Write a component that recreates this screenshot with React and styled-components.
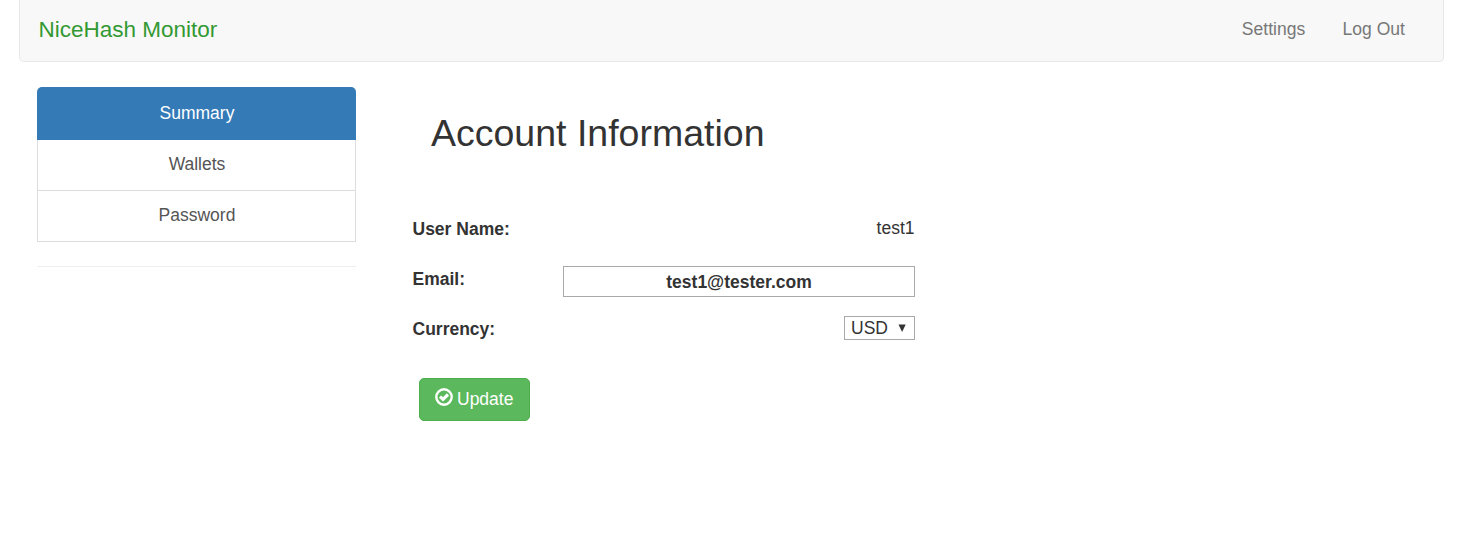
import React from "react";
import styled, { createGlobalStyle } from "styled-components";

const Global = createGlobalStyle`
  *, *::before, *::after { box-sizing: border-box; }
  body {
    margin: 0;
    background: #fff;
    color: #333;
    font-family: "Liberation Sans", Helvetica, Arial, sans-serif;
    font-size: 17.5px;
    line-height: 25px;
  }
`;

const Page = styled.div`
  padding: 0 22px 0 19px;
  min-height: 552px;
`;

const Navbar = styled.nav`
  display: flex;
  justify-content: space-between;
  height: 62px;
  padding: 17px 38px 0 18.5px;
  background: #f8f8f8;
  border: 1px solid #e7e7e7;
  border-top: 0;
  border-radius: 0 0 5px 5px;
`;

const Brand = styled.a`
  color: #339933;
  font-size: 22.5px;
`;

const NavLinks = styled.div`
  display: flex;
  gap: 37px;
`;

const NavLink = styled.a`
  color: #777;
  letter-spacing: 0.05px;
`;

const Content = styled.div`
  display: flex;
  padding: 25px 0 0 18px;
`;

const Sidebar = styled.aside`
  width: 319px;
`;

const MenuItem = styled.a`
  display: block;
  height: ${(p) => (p.$active ? 53 : 51)}px;
  padding-top: ${(p) => (p.$active ? 14 : 12)}px;
  padding-left: 1px;
  text-align: center;
  color: ${(p) => (p.$active ? "#fff" : "#555")};
  background: ${(p) => (p.$active ? "#337ab7" : "#fff")};
  border: solid #ddd;
  border-width: ${(p) => (p.$active ? "0" : "0 1px 1px")};
  border-radius: ${(p) => (p.$active ? "5px 5px 0 0" : "0")};
`;

const Divider = styled.hr`
  margin: 24px 0 0;
  border: 0;
  border-top: 1px solid #eee;
`;

const Main = styled.main`
  width: 503px;
  margin-left: 56px;
`;

const Title = styled.h2`
  margin: 25px 0 61px 19px;
  font-size: 37.5px;
  line-height: 43px;
  font-weight: 400;
`;

const Row = styled.div`
  display: flex;
  justify-content: space-between;
  align-items: flex-start;
  height: 50px;
`;

const Label = styled.label`
  padding: 1px 0 0 0.5px;
  font-weight: 700;
`;

const Value = styled.span`
  padding-right: 0.5px;
`;

const EmailInput = styled.input`
  width: 352px;
  height: 31px;
  padding: 2px 1px 0;
  border: 1px solid #a9a9a9;
  border-radius: 0;
  outline: 0;
  background: #fff;
  color: #333;
  font: 700 17.5px "Liberation Sans", Helvetica, Arial, sans-serif;
  text-align: center;
`;

const Select = styled.button`
  display: flex;
  align-items: center;
  justify-content: space-between;
  width: 71px;
  height: 24px;
  padding: 0 8px 0 6px;
  border: 1px solid #a9a9a9;
  border-radius: 0;
  background: #fff;
  color: #333;
  font: 17.5px "Liberation Sans", Helvetica, Arial, sans-serif;
`;

const UpdateButton = styled.button`
  display: flex;
  align-items: center;
  gap: 4px;
  width: 111px;
  height: 43px;
  margin: 12px 0 0 7px;
  padding: 0 0 0 15px;
  border: 1px solid #4cae4c;
  border-radius: 5px;
  background: #5cb85c;
  color: #fff;
  font: 17.5px "Liberation Sans", Helvetica, Arial, sans-serif;

  svg { margin-top: -5px; }
`;

export default function App() {
  return (
    <Page>
      <Global />
      <Navbar>
        <Brand>NiceHash Monitor</Brand>
        <NavLinks>
          <NavLink>Settings</NavLink>
          <NavLink>Log Out</NavLink>
        </NavLinks>
      </Navbar>
      <Content>
        <Sidebar>
          <MenuItem $active>Summary</MenuItem>
          <MenuItem>Wallets</MenuItem>
          <MenuItem>Password</MenuItem>
          <Divider />
        </Sidebar>
        <Main>
          <Title>Account Information</Title>
          <Row>
            <Label>User Name:</Label>
            <Value>test1</Value>
          </Row>
          <Row>
            <Label>Email:</Label>
            <EmailInput defaultValue="test1@tester.com" />
          </Row>
          <Row>
            <Label>Currency:</Label>
            <Select>
              USD
              <svg width="8" height="8" viewBox="0 0 8 8">
                <path d="M0.5 0.5H7.7L4.1 8Z" fill="#333" />
              </svg>
            </Select>
          </Row>
          <UpdateButton>
            <svg width="18" height="18" viewBox="0 0 18 18" fill="none" stroke="#fff">
              <circle cx="9" cy="9" r="7.7" strokeWidth="2.4" />
              <path d="M5 8.6L8 11.3L13 6.5" strokeWidth="3.2" />
            </svg>
            Update
          </UpdateButton>
        </Main>
      </Content>
    </Page>
  );
}
